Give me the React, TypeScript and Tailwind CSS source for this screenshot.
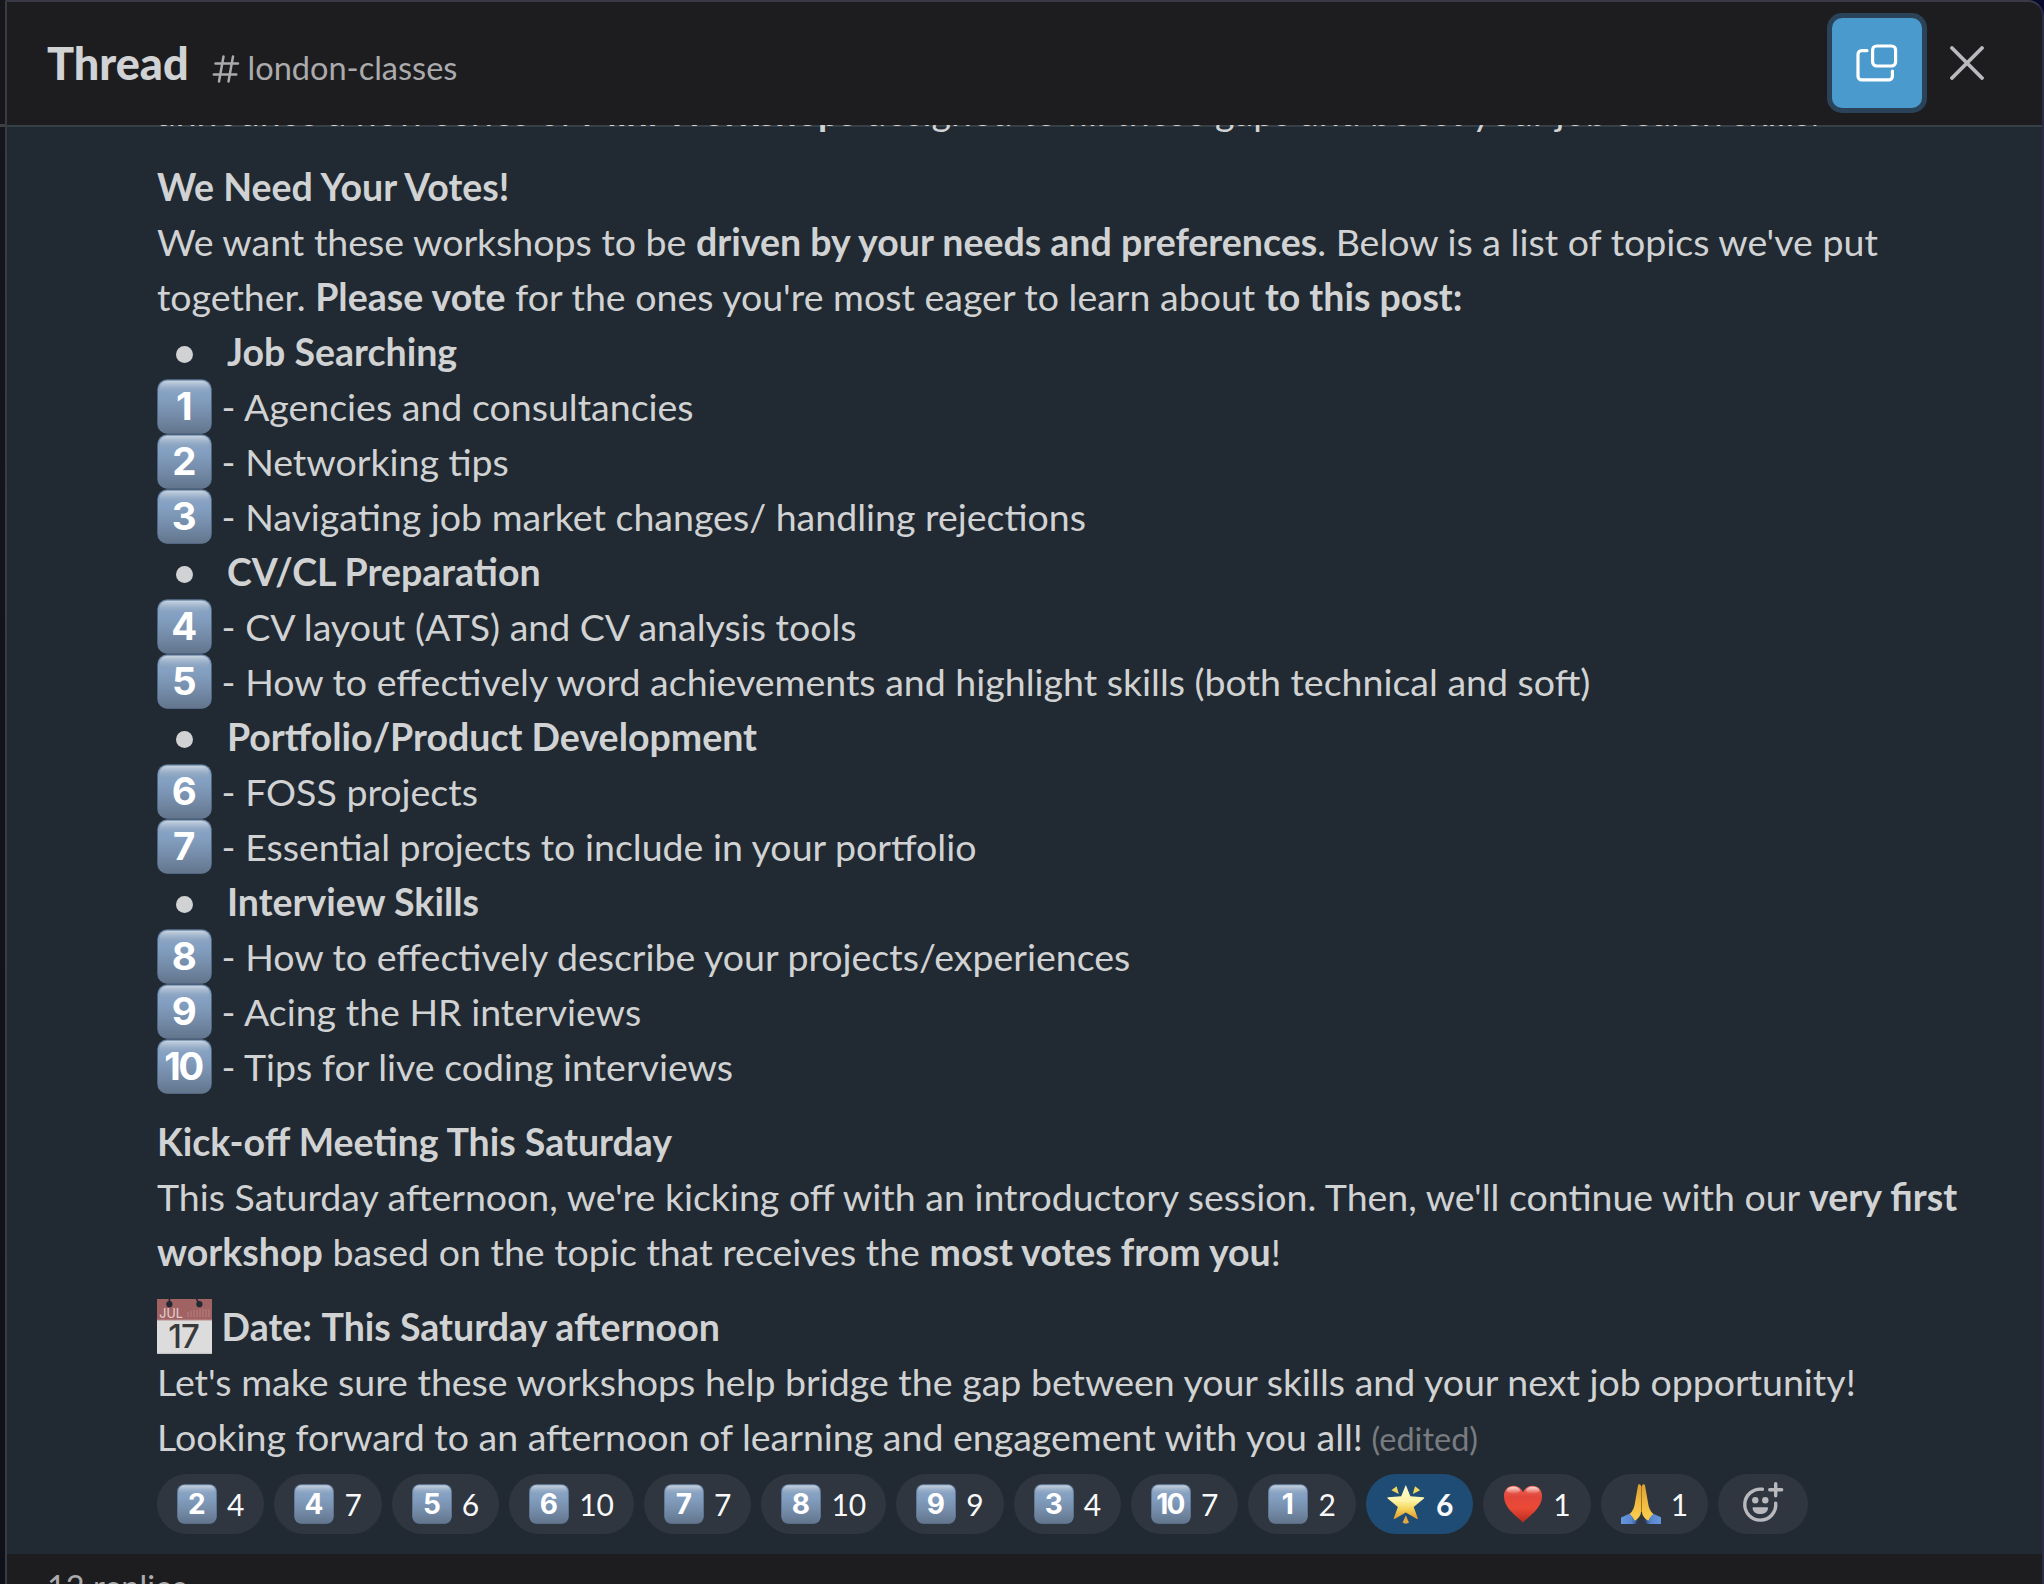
import React from "react";

function Keycap({ n, small }: { n: string; small?: boolean }) {
  return (
    <svg
      viewBox="0 0 55 55"
      className={small ? "block size-10 shrink-0" : "inline-block size-[55px] align-top"}
    >
      <defs>
        <linearGradient id="kc-body" x1="0" y1="0" x2="0" y2="1">
          <stop offset="0" stopColor="#8aa0ba" />
          <stop offset="0.3" stopColor="#84a0c2" />
          <stop offset="0.6" stopColor="#7890ae" />
          <stop offset="1" stopColor="#62758c" />
        </linearGradient>
        <linearGradient id="kc-shine" x1="0" y1="0" x2="0" y2="1">
          <stop offset="0" stopColor="#c8d4e1" />
          <stop offset="1" stopColor="#84a0c2" stopOpacity="0" />
        </linearGradient>
      </defs>
      <rect x="0.2" y="0.3" width="54.6" height="54.5" rx="10" fill="#5b7596" />
      <rect x="1" y="1" width="53" height="53.2" rx="9.5" fill="url(#kc-body)" />
      <rect x="2.6" y="2" width="49.8" height="14" rx="7" fill="url(#kc-shine)" />
      <text
        x={n.length > 1 ? 26 : 27.3}
        y="41"
        textAnchor="middle"
        fontFamily="Inter, sans-serif"
        fontWeight="650"
        fontSize="38.5"
        letterSpacing={n.length > 1 ? -2.5 : 0}
        fill="#fff"
      >
        {n}
      </text>
    </svg>
  );
}

function Calendar() {
  return (
    <svg viewBox="0 0 55 55" className="inline-block size-[55px] shrink-0 align-top">
      <rect width="55" height="55" fill="#dcdcdc" />
      <rect width="55" height="21" fill="#a06262" />
      <rect y="20.5" width="55" height="1" fill="#b98c8c" />
      <rect y="53.8" width="55" height="1.2" fill="#c4c4c4" />
      <circle cx="12.4" cy="5.2" r="3.1" fill="#212a32" />
      <circle cx="42.4" cy="5.2" r="3.1" fill="#212a32" />
      <path d="M12.4 5V0M42.4 5L39.5 0" stroke="#212a32" strokeWidth="1.6" />
      <path
        d="M31 18v-5M34 18v-6M37 18v-7M40 18v-7M43 18v-8M46 18v-8M49 18v-8M52 18v-8"
        stroke="#b98585"
        strokeWidth="0.9"
      />
      <text
        x="2.2"
        y="18.5"
        fontFamily="Inter, sans-serif"
        fontSize="12.5"
        fontWeight="500"
        fill="#dcc6c6"
      >
        JUL
      </text>
      <text
        x="26.5"
        y="49"
        textAnchor="middle"
        fontFamily="Inter, sans-serif"
        fontSize="33"
        fontWeight="500"
        letterSpacing="-1"
        fill="#3a3a3a"
      >
        17
      </text>
    </svg>
  );
}

function Star() {
  return (
    <svg viewBox="0 0 40 40" className="block size-10">
      <defs>
        <linearGradient id="star" x1="0" y1="0" x2="0" y2="1">
          <stop offset="0" stopColor="#fffbd6" />
          <stop offset="0.45" stopColor="#fdf5a8" />
          <stop offset="0.7" stopColor="#f5d55a" />
          <stop offset="1" stopColor="#dd962a" />
        </linearGradient>
      </defs>
      <path
        d="M19.8 1l4.6 11.200 13.100 1.100c.8.1 1 .8.4 1.300l-10.200 8.300 4.100 11.300c.2.7-.3 1.100-.9.800L19.800 28.600 8.700 35c-.6.3-1.100-.1-.9-.8l4.100-11.300L1.700 14.600c-.6-.5-.4-1.200.4-1.300l13.100-1.100z"
        fill="url(#star)"
      />
      <path d="M5.400 6.200l5.200-4 2.200 7.900z" fill="#f3d55c" />
      <path d="M34.200 6.200l-5.200-4-2.200 7.900z" fill="#f3d55c" />
      <path d="M19.800 31.200l3.200 7.600c-1.900 1.100-4.500 1.100-6.400 0z" fill="#e4a843" />
    </svg>
  );
}

function Heart() {
  return (
    <svg viewBox="0 0 40 40" className="block size-10">
      <defs>
        <linearGradient id="heart" x1="0" y1="0" x2="0" y2="1">
          <stop offset="0" stopColor="#ee6a5e" />
          <stop offset="0.3" stopColor="#e2463a" />
          <stop offset="0.6" stopColor="#ec4a36" />
          <stop offset="1" stopColor="#b82a20" />
        </linearGradient>
        <linearGradient id="heart-shine" x1="0" y1="0" x2="0" y2="1">
          <stop offset="0" stopColor="#fff" stopOpacity="0.75" />
          <stop offset="1" stopColor="#fff" stopOpacity="0" />
        </linearGradient>
      </defs>
      <path
        d="M20 38.5C16 33.5 1 25 1 12.2 1 5.8 5.3 1.8 10.5 1.8c4.2 0 7.8 2.6 9.5 6.400 1.700-3.800 5.300-6.400 9.500-6.400 5.200 0 9.500 4 9.500 10.400C39 25 24 33.5 20 38.5z"
        fill="url(#heart)"
      />
      <ellipse cx="10.3" cy="6.3" rx="6.6" ry="3.6" fill="url(#heart-shine)" />
      <ellipse cx="29.7" cy="6.3" rx="6.6" ry="3.6" fill="url(#heart-shine)" />
    </svg>
  );
}

function Pray() {
  return (
    <svg viewBox="0 0 40 40" className="block size-10">
      <defs>
        <linearGradient id="hand" x1="0" y1="0" x2="0" y2="1">
          <stop offset="0" stopColor="#dca032" />
          <stop offset="0.45" stopColor="#efb840" />
          <stop offset="1" stopColor="#fbd04e" />
        </linearGradient>
        <linearGradient id="sleeve" x1="0" y1="0" x2="1" y2="0">
          <stop offset="0" stopColor="#6596dc" />
          <stop offset="0.6" stopColor="#5a88d0" />
          <stop offset="1" stopColor="#223a6c" />
        </linearGradient>
      </defs>
      <path id="sl" d="M0 33.5L9.5 29.2 17.5 36 14.5 40H0z" fill="url(#sleeve)" />
      <use href="#sl" transform="translate(40.6 0) scale(-1 1)" />
      <path
        id="hn"
        d="M18.3.2c1 0 1.700.8 1.700 2.200V28c0 3.500-2.500 6.500-6.300 8.700C12 33.500 10.800 31.500 8.800 30c3.200-3 4.700-7 5.200-11.500L17 1.500c.1-.9.6-1.300 1.300-1.300z"
        fill="url(#hand)"
      />
      <use href="#hn" transform="translate(41 0) scale(-1 1)" />
      <path d="M20.5 2v26" stroke="#a8741f" strokeWidth="1" />
    </svg>
  );
}

function AddReaction() {
  return (
    <svg
      viewBox="0 0 50 50"
      className="block size-[50px]"
      fill="none"
      stroke="#b9b9bd"
      strokeWidth="3.4"
      strokeLinecap="round"
    >
      <path d="M24.4 10.3A15.5 15.5 0 1 0 37.7 24.2" />
      <path d="M37.7 4.7v12M31.7 10.7h12" />
      <circle cx="17.3" cy="21.3" r="3.2" fill="#b9b9bd" stroke="none" />
      <circle cx="27.3" cy="21.3" r="3.2" fill="#b9b9bd" stroke="none" />
      <path
        d="M15.7 28.3h13.2c.8 0 1.300.6 1.100 1.400-.8 3.300-3.600 5.400-7.700 5.400s-6.900-2.100-7.700-5.400c-.2-.8.3-1.400 1.100-1.400z"
        fill="#b9b9bd"
        stroke="none"
      />
    </svg>
  );
}

const Dot = () => (
  <span className="flex w-[70px] shrink-0 items-start pt-[22px] pl-[19px]">
    <span className="size-[17px] rounded-full bg-[#d1d2d3]" />
  </span>
);

function Heading({ children }: { children: React.ReactNode }) {
  return (
    <div className="flex h-[55px] font-bold">
      <Dot />
      <span>{children}</span>
    </div>
  );
}

function Item({ n, children }: { n: string; children: React.ReactNode }) {
  return (
    <div className="flex h-[55px] whitespace-pre">
      <Keycap n={n} />
      <span> - {children}</span>
    </div>
  );
}

const B = ({ children }: { children: React.ReactNode }) => <b className="font-bold">{children}</b>;

const keycapReactions: [string, number][] = [
  ["2", 4],
  ["4", 7],
  ["5", 6],
  ["6", 10],
  ["7", 7],
  ["8", 10],
  ["9", 9],
  ["3", 4],
  ["10", 7],
  ["1", 2],
];

function Chip({ icon, count, active }: { icon: React.ReactNode; count: number; active?: boolean }) {
  return (
    <div
      className={
        active
          ? "flex h-[60px] items-center gap-[10px] rounded-full bg-[#1f4c74] px-5 font-bold"
          : "flex h-[60px] items-center gap-[10px] rounded-full bg-[#2f363f] px-5"
      }
    >
      {icon}
      <span className="text-[30px] leading-[60px] text-[#f8f8f8]">{count}</span>
    </div>
  );
}

export default function App() {
  return (
    <div className="flex h-[1584px] w-[2044px] overflow-hidden bg-[#070a2c] font-['Lato',sans-serif] text-[#d1d2d3]">
      <div className="flex w-[5px] shrink-0 flex-col">
        <div className="h-[124px] bg-[#16171b]" />
        <div className="h-[3px] bg-[#3f4044]" />
        <div className="flex-1 bg-gradient-to-b from-[#15161b] to-[#0f1119]" />
      </div>
      <div className="flex flex-1 flex-col overflow-hidden rounded-tr-[16px] border-t-2 border-r-2 border-l-2 border-t-[#393947] border-r-[#2b2b48] border-l-[#393a44] bg-[#1d1d20]">
        <header className="flex h-[123px] shrink-0 items-center pr-[58px] pb-px pl-[40px]">
          <div className="flex flex-1 items-baseline">
            <h1 className="text-[45px] leading-[60px] font-black">Thread</h1>
            <svg
              viewBox="0 0 28 28"
              className="mr-[8px] ml-[23px] size-[28px] translate-y-[3px]"
              fill="none"
              stroke="#ababad"
              strokeWidth="2.5"
              strokeLinecap="round"
            >
              <path d="M11.5 1.500L7 26.500M21 1.500l-4.500 25M3.500 8.500H26M1.800 19.500h22.500" />
            </svg>
            <span className="text-[32.5px] leading-[45px] text-[#ababad]">london-classes</span>
          </div>
          <div className="mr-[28px] flex size-[90px] items-center justify-center rounded-[10px] bg-[#4a9acd] shadow-[0_0_0_5px_#2b4358]">
            <svg
              viewBox="0 0 42 38"
              className="h-[38px] w-[42px]"
              fill="none"
              stroke="#fff"
              strokeWidth="3.2"
              strokeLinecap="round"
            >
              <rect x="16.6" y="2" width="23" height="20" rx="4" />
              <path d="M11 6.600H5.600a3.600 3.600 0 0 0-3.600 3.600v22a3.600 3.600 0 0 0 3.600 3.600h27.200a3.600 3.600 0 0 0 3.600-3.600V27" />
            </svg>
          </div>
          <svg
            viewBox="0 0 34 34"
            className="size-[34px]"
            fill="none"
            stroke="#b9babd"
            strokeWidth="3.8"
            strokeLinecap="round"
          >
            <path d="M2 2l30 30M32 2L2 32" />
          </svg>
        </header>

        <main className="flex h-[1429px] shrink-0 flex-col overflow-hidden bg-[#212a32] pl-[150px] text-[37.5px] leading-[55px] shadow-[inset_0_2px_0_#353f46]">
          <div className="-mt-[41px] mb-5 h-[55px] whitespace-nowrap">
            announce a new series of <B>Mini Workshops</B> designed to fill these gaps and boost your job search
            skills.
          </div>
          <div className="h-[55px]">
            <B>We Need Your Votes!</B>
          </div>
          <div className="h-[110px] whitespace-nowrap">
            We want these workshops to be <B>driven by your needs and preferences</B>. Below is a list of topics
            we've put
            <br />
            together. <B>Please vote</B> for the ones you're most eager to learn about <B>to this post:</B>
          </div>
          <Heading>Job Searching</Heading>
          <Item n="1">Agencies and consultancies</Item>
          <Item n="2">Networking tips</Item>
          <Item n="3">Navigating job market changes/ handling rejections</Item>
          <Heading>CV/CL Preparation</Heading>
          <Item n="4">CV layout (ATS) and CV analysis tools</Item>
          <Item n="5">How to effectively word achievements and highlight skills (both technical and soft)</Item>
          <Heading>Portfolio/Product Development</Heading>
          <Item n="6">FOSS projects</Item>
          <Item n="7">Essential projects to include in your portfolio</Item>
          <Heading>Interview Skills</Heading>
          <Item n="8">How to effectively describe your projects/experiences</Item>
          <Item n="9">Acing the HR interviews</Item>
          <Item n="10">Tips for live coding interviews</Item>

          <div className="mt-5 h-[165px] whitespace-nowrap">
            <B>Kick-off Meeting This Saturday</B>
            <br />
            This Saturday afternoon, we're kicking off with an introductory session. Then, we'll continue with our{" "}
            <B>very first</B>
            <br />
            <B>workshop</B> based on the topic that receives the <B>most votes from you</B>!
          </div>

          <div className="mt-5 flex h-[55px] whitespace-pre">
            <Calendar />
            <span>
              {" "}
              <B>Date:</B> <B>This Saturday afternoon</B>
            </span>
          </div>
          <div className="h-[110px] whitespace-nowrap">
            Let's make sure these workshops help bridge the gap between your skills and your next job opportunity!
            <br />
            Looking forward to an afternoon of learning and engagement with you all!{" "}
            <span className="-ml-px text-[32.5px] text-[#797c81]">(edited)</span>
          </div>

          <div className="mt-[10px] flex gap-[10px]">
            {keycapReactions.map(([n, count]) => (
              <Chip key={n} icon={<Keycap n={n} small />} count={count} />
            ))}
            <Chip icon={<Star />} count={6} active />
            <Chip icon={<Heart />} count={1} />
            <Chip icon={<Pray />} count={1} />
            <div className="flex h-[60px] w-[90px] items-center justify-center rounded-full bg-[#2f363f]">
              <AddReaction />
            </div>
          </div>
        </main>

        <footer className="h-[30px] shrink-0 overflow-hidden pt-[10px] pl-[40px] text-[32.5px] leading-[45px] text-[#ababad]">
          12 replies
        </footer>
      </div>
    </div>
  );
}
